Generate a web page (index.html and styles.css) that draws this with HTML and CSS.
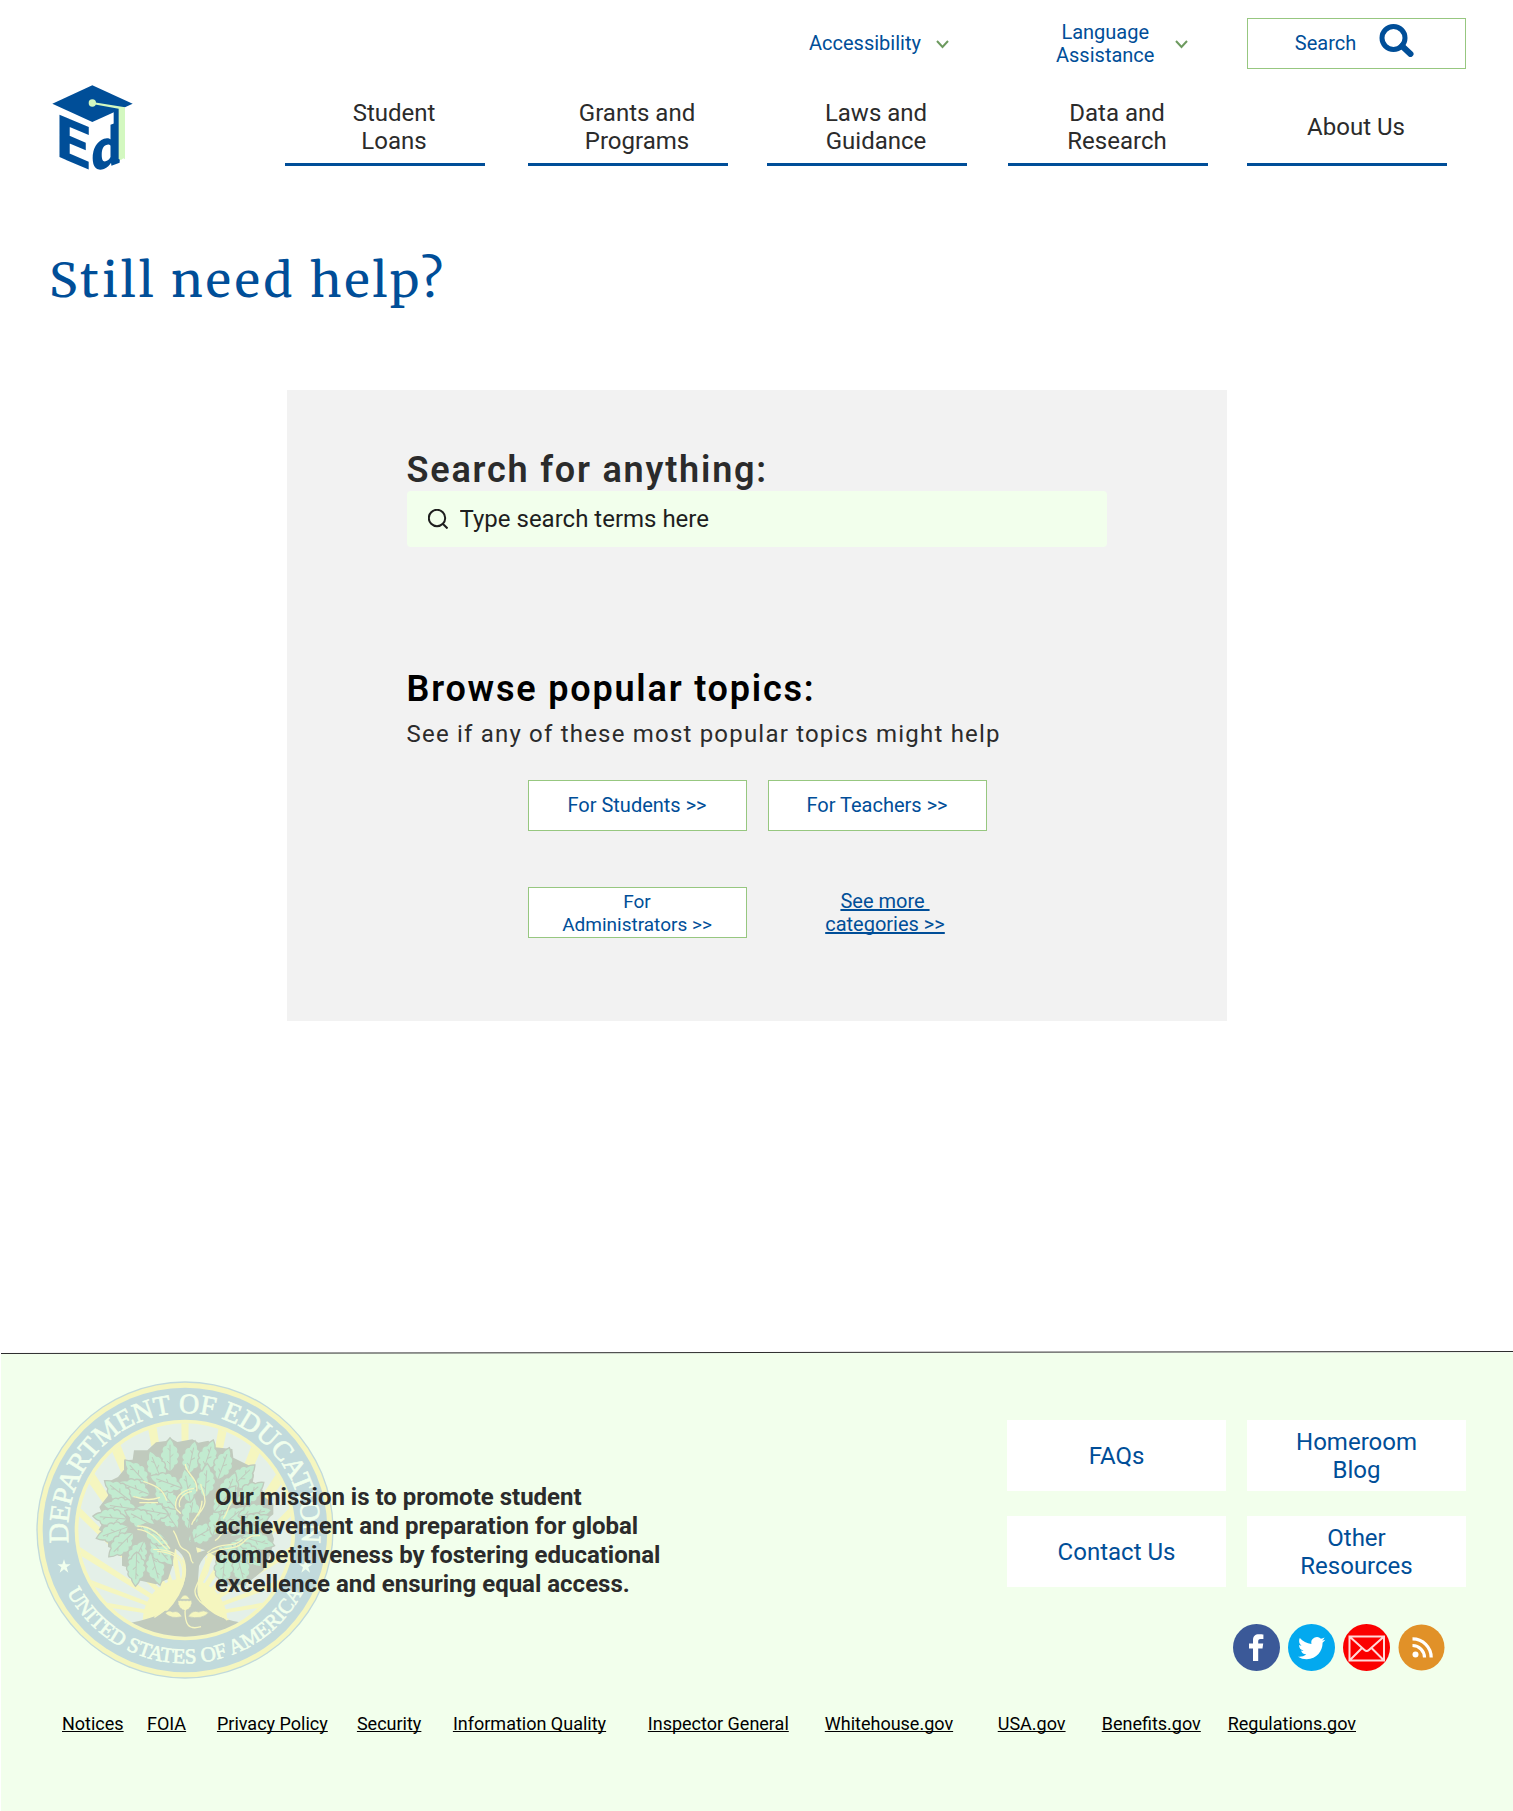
FILE: index.html
```html
<!DOCTYPE html>
<html lang="en">
<head>
<meta charset="utf-8">
<meta name="viewport" content="width=device-width, initial-scale=1">
<title>Still need help? | Department of Education</title>
<link rel="stylesheet" href="styles.css">
</head>
<body>
<header class="site-header">
  <a class="logo" href="#" aria-label="Department of Education home">
    <svg viewBox="66 46 243 255" width="81" height="85" aria-hidden="true">
      <g class="logo-mark">
        <text class="logo-letter" font-size="179" transform="translate(79 258) skewY(23)" x="0" y="0">E</text>
        <text class="logo-letter" font-size="165" transform="translate(184 310) skewY(-20)" x="0" y="0">d</text>
        <rect x="251" y="116" width="17" height="159"/>
        <path d="M67 102 187 47l121 55-121 55z"/>
      </g>
      <g class="logo-tassel">
        <circle cx="187" cy="100" r="11"/>
        <path d="M187 97l98 16v156l-5-3-7 5-7-3V117l-79-14z"/>
      </g>
    </svg>
  </a>
  <div class="header-rows">
    <div class="utility">
      <button class="menu-button menu-accessibility" type="button">
        <span>Accessibility</span>
        <svg class="chevron" viewBox="0 0 13 9" width="13" height="9" aria-hidden="true"><path d="M1 1l5.500 6L12 1"/></svg>
      </button>
      <button class="menu-button" type="button">
        <span class="menu-label-wide">Language<br>Assistance</span>
        <svg class="chevron" viewBox="0 0 13 9" width="13" height="9" aria-hidden="true"><path d="M1 1l5.500 6L12 1"/></svg>
      </button>
      <button class="outline-button search-button" type="button">
        <span>Search</span>
        <svg viewBox="0 0 35 33" width="35" height="33" aria-hidden="true"><circle cx="14.500" cy="14" r="11.500" fill="none" stroke="currentColor" stroke-width="5"/><path d="M23 22l8.500 8" stroke="currentColor" stroke-width="6" stroke-linecap="round"/></svg>
      </button>
    </div>
    <nav class="main-nav" aria-label="Main">
      <a href="#">Student<br>Loans</a>
      <a href="#">Grants and<br>Programs</a>
      <a href="#">Laws and<br>Guidance</a>
      <a href="#">Data and<br>Research</a>
      <a href="#">About Us</a>
    </nav>
  </div>
</header>

<main>
  <h1>Still need help?</h1>
  <section class="help-card">
    <h2 class="search-title"><label for="terms">Search for anything:</label></h2>
    <div class="search-field">
      <svg viewBox="0 0 20 20" width="20" height="20" aria-hidden="true"><circle cx="9" cy="9" r="8.200"/><path d="M14.500 14.500l5 5"/></svg>
      <input id="terms" type="search" placeholder="Type search terms here">
    </div>
    <h2 class="browse-title">Browse popular topics:</h2>
    <p class="browse-text">See if any of these most popular topics might help</p>
    <div class="topics">
      <button class="outline-button" type="button">For Students &gt;&gt;</button>
      <button class="outline-button" type="button">For Teachers &gt;&gt;</button>
      <button class="outline-button outline-button-long" type="button">For<br>Administrators &gt;&gt;</button>
      <a class="more-link" href="#">See more&nbsp;<br>categories &gt;&gt;</a>
    </div>
  </section>
</main>

<footer class="site-footer">
  <svg class="footer-rule" viewBox="0 0 1513 3" preserveAspectRatio="none" aria-hidden="true"><path class="footer-rule-base" d="M0 2.500 1513 1.500V3H0z"/><path class="footer-rule-line" d="M0 2.500 1513 .500"/></svg>
  <div class="footer-body">
    <div class="footer-top">
      <svg class="seal" viewBox="48 121 894 894" width="298" height="298" role="img" aria-label="Department of Education seal">
        <defs>
          <path id="arc-top" d="M495 919A351 351 0 0 1 495 217A351 351 0 0 1 495 919"/>
          <path id="arc-bottom" d="M95 568A400 400 0 0 0 895 568"/>
          <clipPath id="inner"><circle cx="495" cy="568" r="320"/></clipPath>
          <g id="leaf">
            <path class="leaf" d="M0 6C-10 0-16-6-15-14-25-16-29-26-23-33-32-38-31-50-23-55-27-66-20-73-13-74-11-86-4-93 0-97 5-91 12-84 13-74 21-71 27-63 23-54 32-48 30-38 23-33 29-25 25-16 15-14 15-6 8 0 0 6z"/>
            <path class="vein" d="M0 4V-76M0-18l-9-9M0-38l10-9M0-58l-7-8"/>
          </g>
        </defs>
        <circle cx="495" cy="568" r="446" fill="#c1dadc"/>
        <circle cx="495" cy="568" r="442" fill="#f5f6bf"/>
        <circle cx="495" cy="568" r="427" fill="#c1dadc"/>
        <circle cx="495" cy="568" r="331" fill="#f5f6bf"/>
        <circle cx="495" cy="568" r="320" fill="#e4f0e8"/>
        <g clip-path="url(#inner)">
          <g fill="#f5f6bf">
            <path d="M490 830 484 230h22L500 830zM490 830 378 230h27L500 830zM490 830 602 230h27L500 830zM490 830 258 290l28-18L500 830zM490 830 712 272l28 18L500 830zM490 830 188 400l20-25L500 825zM490 825 785 375l20 25L500 830zM490 832 150 500l8-22L500 825zM490 825 832 478l8 22L500 832zM490 834 150 625l8-20L500 828zM490 828 832 605l8 20L500 834zM490 834 150 712l6-16L500 828zM490 828 834 696l6 16L500 834zM490 836 180 787l4-14L500 828zM490 828 806 773l4 14L500 836z"/>
            <circle cx="495" cy="840" r="127"/>
          </g>
          <path fill="#c0cabd" d="M320 848Q400 835 435 810L560 810Q600 835 675 848L675 900H320z"/>
        </g>
        <path class="bark" d="M450 292l22 12 45-8 18 10 30-6 20 20 52 5 3 26 52 26 10 26-4 24 26 12 10 30 26 20 0 32-18 14 20 60-10 44-22 50-44 36-46 14-44-20 10-60-50-30-60-20-30 10-10 60-12 36-36 16-42-10-26-4-12-36-22-6 0-40-42-16 0-32-28-20 18-30-16-38 26-34-2-40 32-16 18-22 0-28 26-2 4-28 40 0 26-24 30-4z"/>
        <g class="leaves">
          <use href="#leaf" transform="translate(505 560) rotate(10)"/>
          <use href="#leaf" transform="translate(470 560) rotate(-35)"/>
          <use href="#leaf" transform="translate(510 600) rotate(60)"/>
          <use href="#leaf" transform="translate(580 580) rotate(20)"/>
          <use href="#leaf" transform="translate(600 560) rotate(50)"/>
          <use href="#leaf" transform="translate(615 600) rotate(95)"/>
          <use href="#leaf" transform="translate(600 610) rotate(140)"/>
          <use href="#leaf" transform="translate(450 388) rotate(0)"/>
          <use href="#leaf" transform="translate(425 420) rotate(-22)"/>
          <use href="#leaf" transform="translate(505 395) rotate(12)"/>
          <use href="#leaf" transform="translate(550 390) rotate(18)"/>
          <use href="#leaf" transform="translate(595 412) rotate(20)"/>
          <use href="#leaf" transform="translate(555 465) rotate(4)"/>
          <use href="#leaf" transform="translate(635 440) rotate(46)"/>
          <use href="#leaf" transform="translate(610 485) rotate(22)"/>
          <use href="#leaf" transform="translate(655 485) rotate(52)"/>
          <use href="#leaf" transform="translate(660 525) rotate(80)"/>
          <use href="#leaf" transform="translate(585 510) rotate(40)"/>
          <use href="#leaf" transform="translate(660 565) rotate(66)"/>
          <use href="#leaf" transform="translate(670 590) rotate(105)"/>
          <use href="#leaf" transform="translate(655 610) rotate(135)"/>
          <use href="#leaf" transform="translate(650 640) rotate(165)"/>
          <use href="#leaf" transform="translate(615 640) rotate(185)"/>
          <use href="#leaf" transform="translate(510 480) rotate(-10)"/>
          <use href="#leaf" transform="translate(465 500) rotate(-40)"/>
          <use href="#leaf" transform="translate(480 440) rotate(-70)"/>
          <use href="#leaf" transform="translate(380 430) rotate(-42)"/>
          <use href="#leaf" transform="translate(385 460) rotate(-68)"/>
          <use href="#leaf" transform="translate(330 480) rotate(-52)"/>
          <use href="#leaf" transform="translate(345 505) rotate(-82)"/>
          <use href="#leaf" transform="translate(315 535) rotate(-85)"/>
          <use href="#leaf" transform="translate(440 520) rotate(-80)"/>
          <use href="#leaf" transform="translate(400 555) rotate(-62)"/>
          <use href="#leaf" transform="translate(320 560) rotate(-110)"/>
          <use href="#leaf" transform="translate(335 580) rotate(-135)"/>
          <use href="#leaf" transform="translate(370 605) rotate(-155)"/>
          <use href="#leaf" transform="translate(350 640) rotate(-178)"/>
          <use href="#leaf" transform="translate(395 640) rotate(165)"/>
          <use href="#leaf" transform="translate(395 600) rotate(140)"/>
          <use href="#leaf" transform="translate(450 605) rotate(-60)"/>
        </g>
        <path class="trunk" d="M352 556q70 5 95 60 60 20 50 90-10 60-60 110l90 20 90 0q-80-30-85-90l5-70q20-50 80-60l60-35-50 5q-50 40-95 50l-15-60 20-60-30 0 5 90-45-50-25 10q-50-30-90-10z"/>
        <g class="bark-lines">
          <path d="M352 556c60 0 80 50 98 68M352 566c50 4 70 50 90 60M400 626c60 0 95 20 95 70s-50 110-92 134M412 632c60 4 80 30 76 70s-30 80-66 112M460 570c20 30 10 50 40 60 20 15 5 25 20 38M556 650c10 40-20 60-30 95s50 65 100 92M566 652c8 50-20 60-30 95s50 60 86 92M560 645c50-35 80-10 110-40 20-22 30-20 50-20M562 636c40-36 80-12 106-40M515 552c10-30 40-40 40-70s-15-40-12-52M522 540c10-20 24-30 24-60M496 370c0 30 40 40 34 82M370 422c30 10 60 20 70 58M340 468c30 5 40 15 80 2M358 486h56M522 443c-40 5-60 30-54 60 6 10 10 10 14 16M516 452c-30 5-44 30-36 48M642 474c-20 20-16 40-32 60M625 570c-20-4-20 20-40 30"/>
          <path d="M495 808c0 40 8 62 48 50"/>
        </g>
        <g class="acorn">
          <path d="M480 776q15-26 30 0z"/>
          <path d="M474 780h41q2 22-20 30-22-8-21-30z" stroke-dasharray="6 4"/>
          <path d="M486 828q-10-20-28-14-14-8-22 4 16 18 50 10zM504 828q14-22 32-14 16-8 30 2-20 22-62 12z"/>
        </g>
        <g fill="#f1ffed">
          <path id="star" d="M132 656l5 15h15l-12 9 5 16-13-10-13 10 5-16-12-9h15z"/>
          <use href="#star" x="725" y="0"/>
        </g>
        <text class="seal-text seal-text-top"><textPath href="#arc-top" startOffset="50%">DEPARTMENT OF EDUCATION</textPath></text>
        <text class="seal-text seal-text-bottom"><textPath href="#arc-bottom" startOffset="50%">UNITED STATES OF AMERICA</textPath></text>
      </svg>
      <p class="mission">Our mission is to promote student achievement and preparation for global competitiveness by fostering educational excellence and ensuring equal access.</p>
      <div class="footer-side">
        <nav class="quick-links" aria-label="Help">
          <a href="#">FAQs</a>
          <a href="#">Homeroom<br>Blog</a>
          <a href="#">Contact Us</a>
          <a href="#">Other<br>Resources</a>
        </nav>
        <div class="social">
          <a href="#" aria-label="Facebook"><svg viewBox="0 0 47 47" width="47" height="47"><circle cx="23.500" cy="23.500" r="23.500" fill="#3b5998"/><path fill="#fff" d="M20 37V24.500h-4V19.500h4V16c0-3.800 2.300-5.800 5.800-5.800 2 0 3.900.2 4.600.3v4.500h-2.800c-2 0-2.400 1-2.400 2.400v2.100h5l-.700 5h-4.300V37z"/></svg></a>
          <a href="#" aria-label="Twitter"><svg viewBox="0 0 47 47" width="47" height="47"><circle cx="23.500" cy="23.500" r="23.500" fill="#03a9ef"/><path fill="#fff" transform="translate(10 10.500) scale(1.140)" d="M23.953 4.570a10 10 0 0 1-2.825.775 4.958 4.958 0 0 0 2.163-2.723c-.951.555-2.005.959-3.127 1.184a4.920 4.920 0 0 0-8.384 4.482C7.690 8.095 4.067 6.130 1.640 3.162a4.822 4.822 0 0 0-.666 2.475c0 1.710.870 3.213 2.188 4.096a4.904 4.904 0 0 1-2.228-.616v.060a4.923 4.923 0 0 0 3.946 4.827 4.996 4.996 0 0 1-2.212.085 4.936 4.936 0 0 0 4.604 3.417 9.867 9.867 0 0 1-6.102 2.105c-.390 0-.779-.023-1.170-.067a13.995 13.995 0 0 0 7.557 2.209c9.053 0 13.998-7.496 13.998-13.985 0-.210 0-.420-.015-.630A9.935 9.935 0 0 0 24 4.590z"/></svg></a>
          <a href="#" aria-label="Email"><svg viewBox="0 0 47 47" width="47" height="47"><circle cx="23.500" cy="23.500" r="23.500" fill="#fb0000"/><path fill="none" stroke="#ffdada" stroke-width="2" d="M6.500 12.500h34.500v24H6.500zM6.500 12.500 21.500 26q2.200 2 4.400 0L41 12.500M6.500 36.500 19 24M41 36.500 28.500 24"/></svg></a>
          <a href="#" aria-label="RSS"><svg viewBox="0 0 47 47" width="47" height="47"><circle cx="23.500" cy="23.500" r="23" fill="#e19128"/><circle cx="17.500" cy="30.500" r="3" fill="#fff"/><path fill="none" stroke="#fff" stroke-width="3.200" d="M14.500 21.500a12 12 0 0 1 12 12M14.500 14.800a18.700 18.700 0 0 1 18.700 18.700"/></svg></a>
        </div>
      </div>
    </div>
    <nav class="legal-links" aria-label="Legal and related sites">
      <a href="#">Notices</a>
      <a href="#">FOIA</a>
      <a href="#">Privacy Policy</a>
      <a href="#">Security</a>
      <a href="#">Information Quality</a>
      <a href="#">Inspector General</a>
      <a href="#">Whitehouse.gov</a>
      <a href="#">USA.gov</a>
      <a href="#">Benefits.gov</a>
      <a href="#">Regulations.gov</a>
    </nav>
  </div>
</footer>
</body>
</html>
```
FILE: styles.css
```css
:root {
  --blue: #004e98;
  --ink: #2b2b2b;
  --mint: #f2ffec;
  --green-line: #97c780;
}

*,
*::before,
*::after {
  box-sizing: border-box;
}

body {
  margin: 0;
  background: #fff;
  color: var(--ink);
  font-family: Roboto, "Liberation Sans", sans-serif;
  font-size: 24px;
  line-height: 28px;
}

h1,
h2,
p {
  margin: 0;
}

a {
  color: inherit;
  text-decoration: none;
}

button,
input {
  font: inherit;
  color: inherit;
}

svg {
  display: block;
  flex: none;
}

/* Header */

.site-header {
  display: flex;
  justify-content: space-between;
  gap: 32px;
  padding: 18px 47px 0 52px;
}

.logo {
  margin-top: 67px;
}

.logo svg {
  overflow: visible;
}

.logo-mark {
  fill: var(--blue);
}

.logo-letter {
  font-family: Roboto, sans-serif;
  font-weight: 900;
}

.logo-tassel {
  fill: #d3f8c0;
}

.header-rows {
  flex: 0 1 1181px;
}

.utility,
.main-nav {
  display: grid;
  grid-template-columns: 243fr 239fr 241fr 239fr 219fr;
}

.utility {
  height: 51px;
  color: var(--blue);
  font-size: 20px;
  line-height: 23px;
}

.menu-button {
  display: flex;
  align-items: center;
  gap: 15px;
  padding: 0 0 0 42px;
  border: 0;
  background: none;
}

.menu-accessibility {
  grid-column: 3;
}

.menu-label-wide {
  padding: 0 6px;
}

.chevron {
  margin-top: 2px;
  fill: none;
  stroke: #6d9a5f;
  stroke-width: 2;
}

.outline-button {
  display: flex;
  align-items: center;
  justify-content: center;
  padding: 0;
  border: 1px solid var(--green-line);
  background: #fff;
  color: var(--blue);
  font-size: 20px;
  line-height: 23px;
}

.outline-button-long {
  font-size: 19px;
}

.search-button {
  gap: 23px;
  padding: 0 4px 6px 0;
}

.search-button span {
  padding-top: 6px;
}

.main-nav {
  margin-top: 30px;
}

.main-nav a {
  display: flex;
  align-items: center;
  justify-content: center;
  width: 200px;
  max-width: 92%;
  height: 67px;
  padding: 0 0 8px 18px;
  border-bottom: 3px solid var(--blue);
  text-align: center;
}

/* Main */

h1 {
  margin: 80px 49px 80px;
  color: var(--blue);
  font-family: Merriweather, "DejaVu Serif Condensed", "DejaVu Serif", serif;
  font-size: 48px;
  font-weight: 400;
  line-height: 60px;
  letter-spacing: 3px;
}

h2 {
  font-size: 36px;
  font-weight: 600;
  line-height: 42px;
  letter-spacing: 0.05em;
}

.help-card {
  max-width: 940px;
  margin: 0 auto;
  padding: 59px 120px 83px;
  background: #f2f2f2;
}

.search-field {
  display: flex;
  align-items: center;
  gap: 12px;
  height: 56px;
  padding: 0 21px;
  border-radius: 4px;
  background: var(--mint);
  color: #1e1e1e;
}

.search-field svg {
  fill: none;
  stroke: currentColor;
  stroke-width: 2;
}

.search-field input {
  flex: 1;
  min-width: 0;
  padding: 0;
  border: 0;
  outline: 0;
  background: none;
  appearance: none;
}

.search-field input::placeholder {
  color: #1e1e1e;
  opacity: 1;
}

.browse-title {
  margin-top: 121px;
  color: #000;
}

.browse-text {
  margin-top: 10px;
  letter-spacing: 0.05em;
}

.topics {
  display: grid;
  grid-template-columns: 219px 219px;
  grid-auto-rows: 51px;
  gap: 56px 21px;
  margin: 32px 0 0 121px;
}

.more-link {
  align-self: center;
  padding-left: 16px;
  color: var(--blue);
  font-size: 20px;
  line-height: 23px;
  text-align: center;
  text-decoration: underline;
  text-decoration-skip-ink: none;
}

/* Footer */

.site-footer {
  margin: 330px 0 0 1px;
}

.footer-rule {
  width: 100%;
  height: 3px;
}

.footer-rule-base {
  fill: var(--mint);
}

.footer-rule-line {
  fill: none;
  stroke: #2b2b2b;
}

.footer-body {
  padding-bottom: 77px;
  background: var(--mint);
}

.footer-top {
  display: flex;
  align-items: flex-start;
  padding: 27px 47px 0 35px;
}

.mission {
  z-index: 1;
  max-width: 460px;
  margin: 102px 0 0 -119px;
  font-weight: 700;
  line-height: 29px;
}

.footer-side {
  margin: 39px 0 0 auto;
}

.quick-links {
  display: grid;
  grid-template-columns: 219px 219px;
  grid-auto-rows: 71px;
  gap: 25px 21px;
  color: var(--blue);
}

.quick-links a {
  display: flex;
  align-items: center;
  justify-content: center;
  background: #fff;
  text-align: center;
}

.social {
  display: flex;
  justify-content: flex-end;
  gap: 8px;
  margin-top: 37px;
  padding-right: 21px;
}

.legal-links {
  display: grid;
  grid-template-columns: 85fr 70fr 140fr 96fr 195fr 177fr 173fr 104fr 126fr 128fr;
  margin-top: 34px;
  padding: 0 157px 0 61px;
  color: #000;
  font-size: 18px;
  line-height: 21px;
  white-space: nowrap;
  text-decoration-skip-ink: none;
}

.legal-links a {
  text-decoration: underline;
}

/* Seal */

.leaf {
  fill: #c2ebd0;
  stroke: #c0cabd;
  stroke-width: 4;
}

.vein {
  fill: none;
  stroke: #c0cabd;
  stroke-width: 3;
}

.bark,
.trunk {
  fill: #c0cabd;
}

.bark-lines {
  fill: none;
  stroke: #f5f6bf;
  stroke-width: 4;
}

.acorn {
  fill: #f5f6bf;
  stroke: #c0cabd;
  stroke-width: 2;
}

.seal-text {
  fill: #f1ffed;
  stroke: #f1ffed;
  stroke-width: 2;
  font-family: "Liberation Serif", serif;
  text-anchor: middle;
}

.seal-text-top {
  font-size: 84px;
}

.seal-text-bottom {
  font-size: 63px;
}
```
